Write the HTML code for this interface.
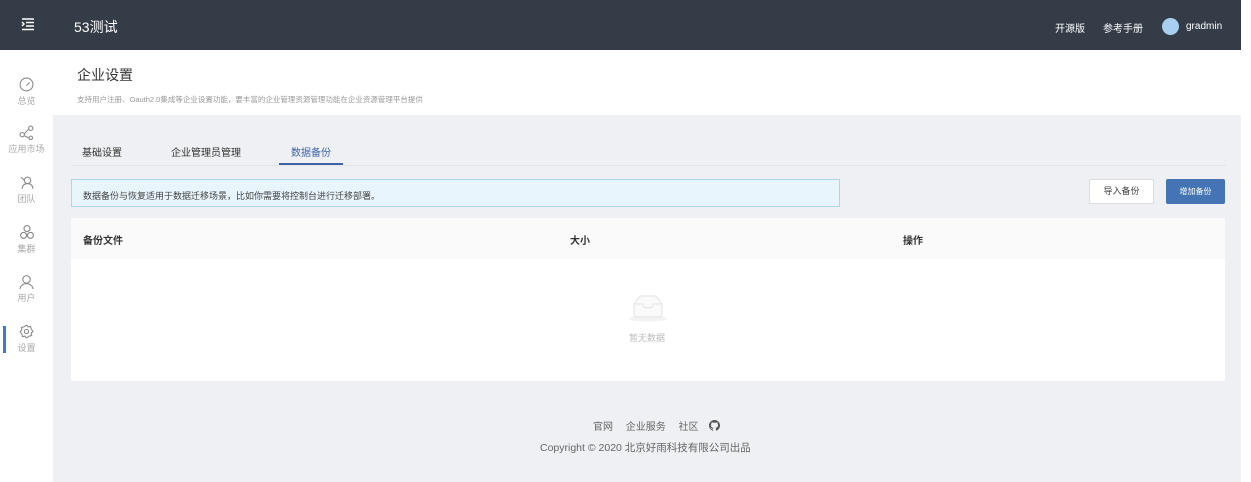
<!DOCTYPE html>
<html><head><meta charset="utf-8"><style>
*{margin:0;padding:0;box-sizing:border-box}
body{width:1251px;height:482px;background:#fff;font-family:"Liberation Sans","Noto Sans CJK SC",sans-serif;position:relative;overflow:hidden;color:#333}
.top{position:absolute;left:0;top:0;width:1241px;height:50px;background:#333c47;color:#fff}
.side{position:absolute;left:0;top:50px;width:53px;height:432px;background:#fff}
.si{position:absolute;left:0;width:53px;text-align:center;font-size:9px;color:#aaa}
.si svg{display:block;margin:0 auto 2px}
.head{position:absolute;left:53px;top:50px;width:1188px;height:65px;background:#fff}
.gray{position:absolute;left:53px;top:115px;width:1188px;height:367px;background:#eef0f3}
.abs{position:absolute}
</style></head><body>
<div class="top">
<svg class="abs" style="left:21px;top:18px" width="14" height="13" viewBox="0 0 14 13" fill="none" stroke="#fff" stroke-width="1.5"><path d="M1 1h12M5 4.5h8M5 8h8M1 11.5h12M1 4l2 2-2 2"/></svg>
<div class="abs" style="left:74px;top:17px;font-size:14px">53测试</div>
<div class="abs" style="left:1055px;top:20px;font-size:10px">开源版</div>
<div class="abs" style="left:1103px;top:20px;font-size:10px">参考手册</div>
<div class="abs" style="left:1162px;top:18px;width:17px;height:17px;border-radius:50%;background:#a9cfee"></div>
<div class="abs" style="left:1186px;top:21px;font-size:10px">gradmin</div>
</div>
<div class="side">
<div class="si" style="top:27px"><svg width="15" height="15" viewBox="0 0 14 14" fill="none" stroke="#888"><circle cx="7" cy="7" r="6"/><path d="M7 8l3-3"/></svg>总览</div>
<div class="si" style="top:75px"><svg width="15" height="15" viewBox="0 0 14 14" fill="none" stroke="#888"><circle cx="3" cy="9" r="2"/><circle cx="11" cy="3" r="2"/><circle cx="11" cy="12" r="1.6"/><path d="M5 8l4-4M5 10l4 2"/></svg>应用市场</div>
<div class="si" style="top:125px"><svg width="15" height="15" viewBox="0 0 14 14" fill="none" stroke="#888"><circle cx="8" cy="5" r="3"/><path d="M3 13c0-3 2-5 5-5s5 2 5 5M2 2l3 3"/></svg>团队</div>
<div class="si" style="top:174px"><svg width="16" height="16" viewBox="0 0 14 14" fill="none" stroke="#888"><circle cx="7" cy="4" r="2.6"/><circle cx="4" cy="10" r="2.6"/><circle cx="10" cy="10" r="2.6"/></svg>集群</div>
<div class="si" style="top:224px"><svg width="15" height="15" viewBox="0 0 14 14" fill="none" stroke="#888"><circle cx="7" cy="5" r="3.5"/><path d="M1 14c0-3 3-5 6-5s6 2 6 5"/></svg>用户</div>
<div class="si" style="top:274px"><svg width="15" height="15" viewBox="0 0 14 14" fill="none" stroke="#888"><circle cx="7" cy="7" r="2"/><path d="M7 1l1.5 1.7 2.3-.5.5 2.3L13 7l-1.7 1.5.5 2.3-2.3.5L7 13l-1.5-1.7-2.3.5-.5-2.3L1 7l1.7-1.5-.5-2.3 2.3-.5z"/></svg>设置</div>
<div class="abs" style="left:3px;top:276px;width:3px;height:27px;background:#3d7ec3"></div>
</div>
<div class="head">
<div class="abs" style="left:24px;top:15px;font-size:14px;color:#333">企业设置</div>
<div class="abs" style="left:24px;top:44px;font-size:7.5px;color:#999;white-space:nowrap">支持用户注册、Oauth2.0集成等企业设置功能，要丰富的企业管理资源管理功能在企业资源管理平台提供</div>
</div>
<div class="gray">
<div class="abs" style="left:18px;top:50px;width:1155px;height:1px;background:#e2e4e8"></div>
<div class="abs" style="left:29px;top:29px;font-size:10px;color:#333">基础设置</div>
<div class="abs" style="left:118px;top:29px;font-size:10px;color:#333">企业管理员管理</div>
<div class="abs" style="left:238px;top:29px;font-size:10px;color:#3d64a8">数据备份</div>
<div class="abs" style="left:226px;top:48px;width:64px;height:2px;background:#3d64a8"></div>
<div class="abs" style="left:18px;top:64px;width:769px;height:28px;background:#e8f5fc;border:1px solid #aad6f0;font-size:9px;color:#444;padding:9px 0 0 11px">数据备份与恢复适用于数据迁移场景，比如你需要将控制台进行迁移部署。</div>
<div class="abs" style="left:1036px;top:64px;width:65px;height:25px;background:#fff;border:1px solid #ddd;border-radius:2px;font-size:9px;color:#444;text-align:center;line-height:23px">导入备份</div>
<div class="abs" style="left:1113px;top:64px;width:59px;height:25px;background:#4474b4;border-radius:2px;font-size:8px;color:#fff;text-align:center;line-height:25px">增加备份</div>
<div class="abs" style="left:18px;top:103px;width:1154px;height:163px;background:#fff">
<div style="height:41px;background:#fafafa;position:relative;font-size:10px;font-weight:bold;color:#333">
<span class="abs" style="left:12px;top:14px">备份文件</span><span class="abs" style="left:499px;top:14px">大小</span><span class="abs" style="left:832px;top:14px">操作</span></div>
<svg class="abs" style="left:555px;top:76px" width="44" height="28" viewBox="0 0 44 28" fill="none"><ellipse cx="22" cy="25" rx="20" ry="2.5" fill="#f3f3f3"/><path d="M8 10l6-8h16l6 8v13H8z" fill="#fafafa" stroke="#e3e3e3"/><path d="M8 10h9c0 3 2 4 5 4s5-1 5-4h9" stroke="#e3e3e3"/></svg>
<div class="abs" style="left:558px;top:113px;font-size:9px;color:#bbb">暂无数据</div>
</div>
<div class="abs" style="left:540px;top:303px;font-size:10px;color:#666;white-space:nowrap">官网　&nbsp;企业服务　&nbsp;社区　<svg width="11" height="11" viewBox="0 0 16 16" style="vertical-align:-1px"><path fill="#555" d="M8 0C3.6 0 0 3.6 0 8c0 3.5 2.3 6.5 5.5 7.6.4.1.5-.2.5-.4v-1.4c-2.2.5-2.7-1-2.700-1-.4-.9-.9-1.2-.9-1.2-.7-.5.1-.5.1-.5.8.1 1.2.8 1.2.8.7 1.2 1.9.9 2.3.7.1-.5.3-.9.5-1.1-1.8-.2-3.600-.9-3.600-4 0-.9.3-1.6.8-2.1-.1-.2-.4-1 .1-2.1 0 0 .7-.2 2.2.8.6-.2 1.3-.3 2-.3s1.4.1 2 .3c1.5-1 2.2-.8 2.2-.8.4 1.1.2 1.9.1 2.1.5.6.8 1.3.8 2.1 0 3.1-1.9 3.7-3.6 3.9.3.3.6.8.6 1.5v2.2c0 .2.1.5.6.4C13.7 14.5 16 11.5 16 8c0-4.400-3.6-8-8-8z"/></svg></div>
<div class="abs" style="left:487px;top:325px;font-size:10.5px;color:#666;white-space:nowrap">Copyright © 2020 北京好雨科技有限公司出品</div>
</div>
</body></html>
